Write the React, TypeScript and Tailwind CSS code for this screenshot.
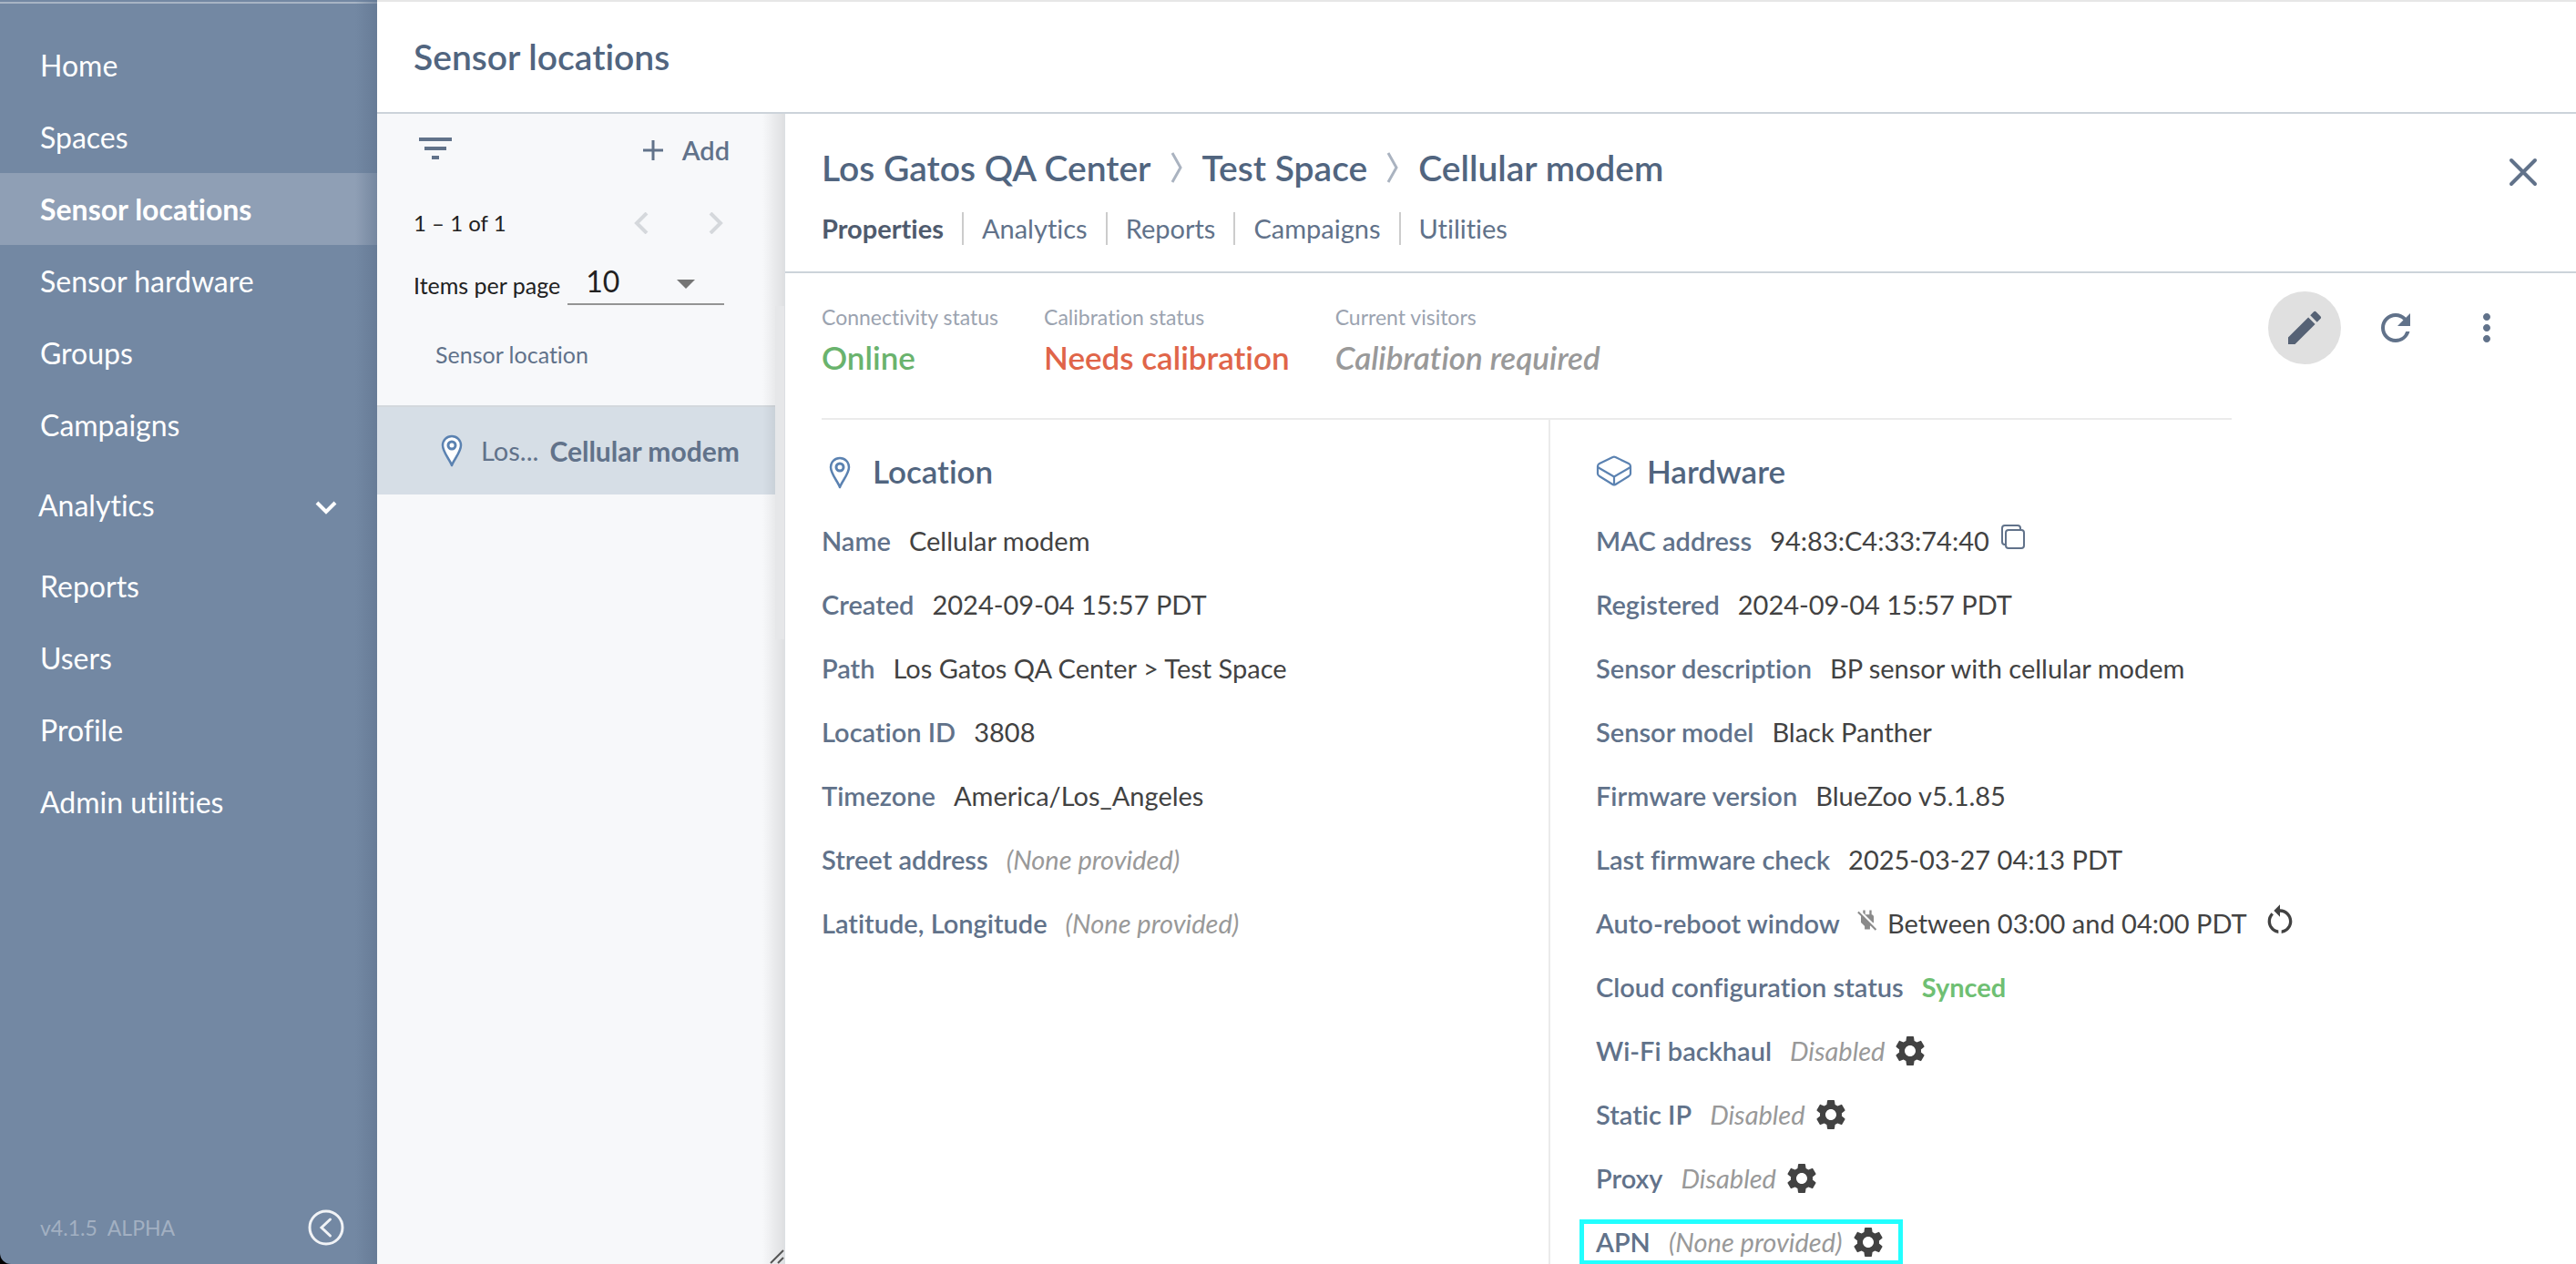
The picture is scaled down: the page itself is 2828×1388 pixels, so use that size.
import { useState, type ReactNode } from 'react';
import { MdCreate, MdFilterList, MdMoreVert, MdPowerOff, MdRefresh, MdRestartAlt, MdSettings } from 'react-icons/md';

const navLinks = [
  { href: '#home', label: 'Home' },
  { href: '#spaces', label: 'Spaces' },
  { href: '#sensor-locations', label: 'Sensor locations', active: true },
  { href: '#sensor-hardware', label: 'Sensor hardware' },
  { href: '#groups', label: 'Groups' },
  { href: '#campaigns', label: 'Campaigns' },
];

const moreLinks = [
  { href: '#reports', label: 'Reports' },
  { href: '#users', label: 'Users' },
  { href: '#profile', label: 'Profile' },
  { href: '#admin', label: 'Admin utilities' },
];

const tabs = ['Properties', 'Analytics', 'Reports', 'Campaigns', 'Utilities'];

function PinIcon({ className, fill = 'none' }: { className?: string; fill?: string }) {
  return (
    <svg className={className} viewBox="0 0 24 36" fill={fill} stroke="#5b82b1" strokeWidth={2.5} strokeLinejoin="round" aria-hidden>
      <path d="M12 34C9.500 27 2 19.500 2 12a10 10 0 0120 0c0 7.500-7.500 15-10 22z" />
      <circle cx="12" cy="12" r="4" strokeWidth={3} />
    </svg>
  );
}

function BoxIcon() {
  return (
    <svg className="w-10 h-9" viewBox="0 0 40 36" fill="none" stroke="#5b82b1" strokeWidth={2.2} strokeLinejoin="round" aria-hidden>
      <path d="M18.500 3L4 10q-2 1-2 3v8q0 2 2 3l14.500 9q1.500.8 3 0L36 24q2-1 2-3v-8q0-2-2-3L21.500 3q-1.500-.7-3 0z" />
      <path d="M2 14l18 10.500L38 14M20 24.500V33" />
    </svg>
  );
}

function CopyIcon() {
  return (
    <svg className="w-7 h-7" viewBox="0 0 28 28" fill="none" stroke="#61728a" strokeWidth={2} aria-hidden>
      <rect x="6" y="6" width="20" height="20" rx="3" />
      <path d="M6 22H5a3 3 0 01-3-3V4a3 3 0 013-3h14a3 3 0 013 3v2" />
    </svg>
  );
}

function Chevron({ d, className }: { d: string; className: string }) {
  return (
    <svg className={className} viewBox="0 0 24 24" fill="none" stroke="currentColor" aria-hidden>
      <path d={d} />
    </svg>
  );
}

function CrumbSeparator() {
  return (
    <svg className="w-5 h-9" viewBox="0 0 20 36" fill="none" stroke="#aab3c0" strokeWidth={3} aria-hidden>
      <path d="M5 2l9 16-9 16" />
    </svg>
  );
}

function NavLink({ href, label, active }: { href: string; label: string; active?: boolean }) {
  return (
    <a
      href={href}
      aria-current={active ? 'page' : undefined}
      className={`flex items-center h-[79px] pl-11 ${active ? 'bg-white/20 font-bold' : ''}`}
    >
      {label}
    </a>
  );
}

function Status({ label, value, className }: { label: string; value: string; className: string }) {
  return (
    <div>
      <dt className="text-[23px] leading-7 text-[#9ba3b0]">{label}</dt>
      <dd className={`mt-2 text-[35px] leading-[44px] font-semibold ${className}`}>{value}</dd>
    </div>
  );
}

function Row({ label, icon, action, children }: { label: string; icon?: ReactNode; action?: ReactNode; children: ReactNode }) {
  return (
    <div className="flex items-center h-[70px]">
      <dt className="font-semibold text-[#61728a]">{label}</dt>
      <dd className="flex items-center ml-5">
        {icon}
        {children}
        {action}
      </dd>
    </div>
  );
}

function None({ children }: { children: ReactNode }) {
  return <span className="italic text-[#999]">{children}</span>;
}

function Gear({ label }: { label: string }) {
  return (
    <button className="ml-2" aria-label={label}>
      <MdSettings className="w-10 h-10 text-[#424242]" />
    </button>
  );
}

function Sidebar() {
  const [open, setOpen] = useState(false);

  return (
    <aside className="relative flex flex-col w-[414px] shrink-0 rounded-bl-xl bg-[#7388a3] text-white text-[32px]">
      <div className="mt-[2px] h-[2px] bg-[#a7b4c4]" />
      <nav className="pt-7" aria-label="Main navigation">
        {navLinks.map((l) => (
          <NavLink key={l.href} {...l} />
        ))}
        <button
          className="flex items-center justify-between w-full h-[98px] pl-[42px] pr-11"
          aria-expanded={open}
          onClick={() => setOpen((o) => !o)}
        >
          Analytics
          <Chevron className="w-6 h-6 stroke-[4]" d="M2 9l10 10L22 9" />
        </button>
        {moreLinks.map((l) => (
          <NavLink key={l.href} {...l} />
        ))}
      </nav>
      <div className="flex items-center justify-between mt-auto pl-11 pr-9 pb-5">
        <span className="text-[23px] text-white/35 whitespace-pre">v4.1.5  ALPHA</span>
        <button aria-label="Collapse sidebar">
          <svg className="w-10 h-10" viewBox="0 0 40 40" fill="none" stroke="#f1f3f6" strokeWidth={3} strokeLinecap="round" aria-hidden>
            <circle cx="20" cy="20" r="18" />
            <path d="M24.500 11L15 20l9.500 9" />
          </svg>
        </button>
      </div>
      <div className="absolute inset-y-0 right-0 w-6 bg-linear-to-r from-transparent to-[#5b6f8a]/50" />
    </aside>
  );
}

function LocationList() {
  return (
    <section className="relative w-[448px] shrink-0 bg-[#f7f8fa] border-r border-[#dcdfe3]">
      <div className="flex items-center justify-between h-20 pl-10 pr-[60px]">
        <button className="mb-1" aria-label="Filter">
          <MdFilterList className="w-12 h-12 text-[#61728a]" />
        </button>
        <button className="flex items-center gap-5 text-[29px] font-semibold text-[#61728a]">
          <Chevron className="w-6 h-6 stroke-[3]" d="M12 1v22M1 12h22" />
          Add
        </button>
      </div>
      <div className="flex items-center justify-between h-20 pl-10 pr-16 text-2xl text-[#212121]">
        <span>1 – 1 of 1</span>
        <div className="flex gap-14 text-[#d5d8dc]">
          <button disabled aria-label="Previous page">
            <Chevron className="w-6 h-6 stroke-[4]" d="M17 1L6 12l11 11" />
          </button>
          <button disabled aria-label="Next page">
            <Chevron className="w-6 h-6 stroke-[4]" d="M7 1l11 11L7 23" />
          </button>
        </div>
      </div>
      <div className="flex items-end gap-2 pl-10 text-[25px] text-[#212121]">
        <label htmlFor="page-size" className="leading-[44px]">Items per page</label>
        <div className="relative w-[172px]">
          <select id="page-size" className="w-full h-[50px] pl-5 appearance-none border-b-2 border-[#949494] text-[32px]" defaultValue="10">
            <option>10</option>
            <option>25</option>
            <option>50</option>
          </select>
          <svg className="absolute right-8 top-[22px] w-5 h-[10px] pointer-events-none" viewBox="0 0 20 10" aria-hidden>
            <path d="M0 0h20L10 10z" fill="#757575" />
          </svg>
        </div>
      </div>
      <h2 className="flex items-center h-[110px] pl-16 text-[25px] text-[#61728a]">Sensor location</h2>
      <a href="#cellular-modem" className="flex items-center h-[98px] pl-[70px] mr-[10px] bg-[#d6dee6] border-t-2 border-[#d3d8dd] text-[29px] text-[#61728a]">
        <PinIcon className="w-6 h-9 mr-5" fill="#fff" />
        <span className="mr-3">Los...</span>
        <span className="text-[30px] font-bold whitespace-nowrap">Cellular modem</span>
      </a>
      <div className="absolute inset-y-0 right-0 w-6 bg-linear-to-r from-transparent to-black/10" />
      {/* Scrollbar thumb */}
      <div className="absolute right-0 top-[211px] w-[10px] h-[366px] bg-[#e6e7e9]" />
      <svg className="absolute right-0 bottom-0 w-4 h-4" viewBox="0 0 16 16" stroke="#555" strokeWidth={2} aria-hidden>
        <path d="M1 15L15 1M9 15l6-6" />
      </svg>
    </section>
  );
}

function Detail() {
  return (
    <main className="flex flex-col flex-1 min-w-0 bg-white">
      <header className="flex justify-between h-[175px] shrink-0 pl-10 pr-10 pt-[34px] border-b-2 border-[#ccd3da]">
        <div>
          <h2 className="flex items-center gap-[18px] text-[39px] leading-[50px] font-semibold text-[#51657f]">
            <a href="#los-gatos">Los Gatos QA Center</a>
            <CrumbSeparator />
            <a href="#test-space">Test Space</a>
            <CrumbSeparator />
            <span>Cellular modem</span>
          </h2>
          <nav className="flex mt-6 text-[29px] leading-9 text-[#61728a] divide-x-2 divide-[#ccc]" aria-label="Sensor location">
            {tabs.map((t, i) => (
              <a
                key={t}
                href={`#${t.toLowerCase()}`}
                className={i === 0 ? 'pr-5 font-bold text-[#4f5b6e]' : 'px-5'}
              >
                {t}
              </a>
            ))}
          </nav>
        </div>
        <button className="self-start mt-3" aria-label="Close">
          <svg className="w-9 h-9" viewBox="0 0 36 36" stroke="#61728a" strokeWidth={4} strokeLinecap="round" aria-hidden>
            <path d="M5 5l26 26M31 5L5 31" />
          </svg>
        </button>
      </header>

      <div className="flex flex-1 pl-10">
        <div className="flex flex-col w-[1548px]">
          <dl className="flex gap-[50px] h-[161px] shrink-0 pt-[34px] border-b-2 border-[#ebebeb]">
            <Status label="Connectivity status" value="Online" className="text-[#6ab36d]" />
            <Status label="Calibration status" value="Needs calibration" className="text-[#e06549]" />
            <Status label="Current visitors" value="Calibration required" className="italic text-[#999]" />
          </dl>
          <div className="flex flex-1 text-[29px] text-[#424242] whitespace-nowrap">
            <section className="w-[800px] shrink-0 pt-6 border-r-2 border-[#ebebeb]">
              <h3 className="flex items-center gap-6 h-16 pl-2 text-[35px] font-semibold text-[#51657f]">
                <PinIcon className="w-6 h-9 mt-1" />
                Location
              </h3>
              <dl className="pt-[10px]">
                <Row label="Name">Cellular modem</Row>
                <Row label="Created">2024-09-04 15:57 PDT</Row>
                <Row label="Path">Los Gatos QA Center &gt; Test Space</Row>
                <Row label="Location ID">3808</Row>
                <Row label="Timezone">America/Los_Angeles</Row>
                <Row label="Street address"><None>(None provided)</None></Row>
                <Row label="Latitude, Longitude"><None>(None provided)</None></Row>
              </dl>
            </section>
            <section className="pt-6 pl-[50px]">
              <h3 className="flex items-center gap-4 h-16 text-[35px] font-semibold text-[#51657f]">
                <BoxIcon />
                Hardware
              </h3>
              <dl className="pt-[10px]">
                <Row label="MAC address" action={<button className="ml-3 mb-2" aria-label="Copy MAC address"><CopyIcon /></button>}>
                  94:83:C4:33:74:40
                </Row>
                <Row label="Registered">2024-09-04 15:57 PDT</Row>
                <Row label="Sensor description">BP sensor with cellular modem</Row>
                <Row label="Sensor model">Black Panther</Row>
                <Row label="Firmware version">BlueZoo v5.1.85</Row>
                <Row label="Last firmware check">2025-03-27 04:13 PDT</Row>
                <Row
                  label="Auto-reboot window"
                  icon={<MdPowerOff className="w-7 h-7 mr-2 mb-2 -ml-1 text-[#8a8a8a]" />}
                  action={<button className="ml-4 mb-2" aria-label="Reboot now"><MdRestartAlt className="w-10 h-10" /></button>}
                >
                  Between 03:00 and 04:00 PDT
                </Row>
                <Row label="Cloud configuration status"><span className="font-bold text-[#6fbf73]">Synced</span></Row>
                <Row label="Wi-Fi backhaul" action={<Gear label="Wi-Fi settings" />}><None>Disabled</None></Row>
                <Row label="Static IP" action={<Gear label="Static IP settings" />}><None>Disabled</None></Row>
                <Row label="Proxy" action={<Gear label="Proxy settings" />}><None>Disabled</None></Row>
                <div className="flex items-center w-fit h-[50px] mt-[10px] -ml-[18px] px-[13px] border-[5px] border-[#22ffff] overflow-hidden">
                  <Row label="APN" action={<Gear label="APN settings" />}><None>(None provided)</None></Row>
                </div>
              </dl>
            </section>
          </div>
        </div>
        <div className="flex gap-5 ml-auto mr-[58px] mt-5 h-20 text-[#61728a]">
          <button className="flex items-center justify-center w-20 h-20 rounded-full bg-[#e0e0e0]" aria-label="Edit">
            <MdCreate className="w-12 h-12 text-[#566275]" />
          </button>
          <button className="flex items-center justify-center w-20 h-20" aria-label="Refresh">
            <MdRefresh className="w-12 h-12" />
          </button>
          <button className="flex items-center justify-center w-20 h-20" aria-label="More">
            <MdMoreVert className="w-12 h-12" />
          </button>
        </div>
      </div>
    </main>
  );
}

export default function App() {
  return (
    <div className="flex h-screen overflow-hidden bg-black font-['Lato','Liberation_Sans',sans-serif] [font-variant-ligatures:none]">
      <Sidebar />
      <div className="flex flex-col flex-1 min-w-0">
        <header className="flex items-center h-[125px] shrink-0 pl-10 bg-white border-t-2 border-b-2 border-t-[#e6e6e6] border-b-[#ccd3da]">
          <h1 className="text-[39px] font-semibold text-[#51657f]">Sensor locations</h1>
        </header>
        <div className="flex flex-1 min-h-0">
          <LocationList />
          <Detail />
        </div>
      </div>
    </div>
  );
}
